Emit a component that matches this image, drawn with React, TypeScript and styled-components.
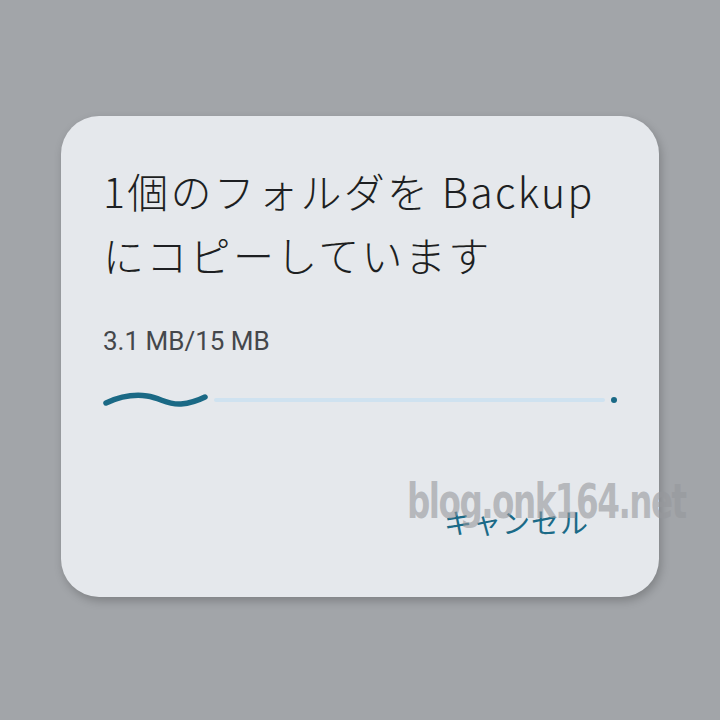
import styled, { createGlobalStyle } from 'styled-components';

const GlobalStyle = createGlobalStyle`
  html, body {
    margin: 0;
    padding: 0;
    background: #a2a5a9;
  }
  body {
    font-family: "Noto Sans CJK JP", "Noto Sans", sans-serif;
  }
`;

const Screen = styled.div`
  position: relative;
  width: 720px;
  height: 720px;
  display: flex;
  justify-content: center;
  padding-top: 116px;
  box-sizing: border-box;
  overflow: hidden;
`;

const Dialog = styled.div`
  width: 598px;
  height: 481px;
  box-sizing: border-box;
  background: #e5e8ec;
  border-radius: 38px;
  box-shadow: 2px 4px 10px rgba(0, 0, 0, 0.22);
  padding: 42px 42px 0 42px;
  display: flex;
  flex-direction: column;
`;

const Title = styled.h1`
  margin: 0;
  font-family: "Noto Sans CJK JP", sans-serif;
  font-weight: 300;
  font-size: 41px;
  line-height: 64px;
  color: #1d1f22;
  letter-spacing: 2.3px;
  white-space: nowrap;
`;

const Size = styled.div`
  margin-top: 40px;
  font-family: Roboto, "Noto Sans", sans-serif;
  font-size: 26px;
  line-height: 30px;
  color: #44474b;
`;

const Progress = styled.div`
  margin-top: 32px;
  display: flex;
  align-items: center;
  height: 24px;
  gap: 5px;
`;

const Track = styled.div`
  flex: 1;
  height: 4px;
  border-radius: 2px;
  background: #cfe2f0;
`;

const EndDot = styled.div`
  width: 6px;
  height: 6px;
  border-radius: 50%;
  background: #1a6985;
  margin-left: 1px;
`;

const Actions = styled.div`
  margin-top: 90px;
  display: flex;
  justify-content: flex-end;
  padding-right: 28px;
`;

const CancelButton = styled.button`
  border: 0;
  background: none;
  padding: 0;
  font-family: "Noto Sans CJK JP", sans-serif;
  font-size: 28px;
  line-height: 40px;
  color: #1b6a87;
  letter-spacing: 1px;
  cursor: pointer;
`;

const Watermark = styled.div`
  position: absolute;
  left: 407px;
  top: 473px;
  font-family: "DejaVu Sans", sans-serif;
  font-weight: 700;
  font-stretch: condensed;
  font-size: 48px;
  letter-spacing: -2px;
  transform: scaleX(0.755);
  transform-origin: left center;
  color: rgba(150, 152, 156, 0.6);
  pointer-events: none;
  white-space: nowrap;
`;

const Wave = () => (
  <svg width="106" height="24" viewBox="0 0 106 24">
    <path
      d="M3 15 C 16 9, 30 6, 44 8 C 58 10, 64 17, 78 16 C 90 15, 96 12, 102 9"
      fill="none"
      stroke="#1a6985"
      strokeWidth="5.5"
      strokeLinecap="round"
    />
  </svg>
);

const App = () => (
  <>
    <GlobalStyle />
    <Screen>
      <Dialog>
        <Title>
          1個のフォルダを Backup
          <br />
          にコピーしています
        </Title>
        <Size>3.1 MB/15 MB</Size>
        <Progress>
          <Wave />
          <Track />
          <EndDot />
        </Progress>
        <Actions>
          <CancelButton>キャンセル</CancelButton>
        </Actions>
      </Dialog>
      <Watermark>blog.onk164.net</Watermark>
    </Screen>
  </>
);

export default App;
